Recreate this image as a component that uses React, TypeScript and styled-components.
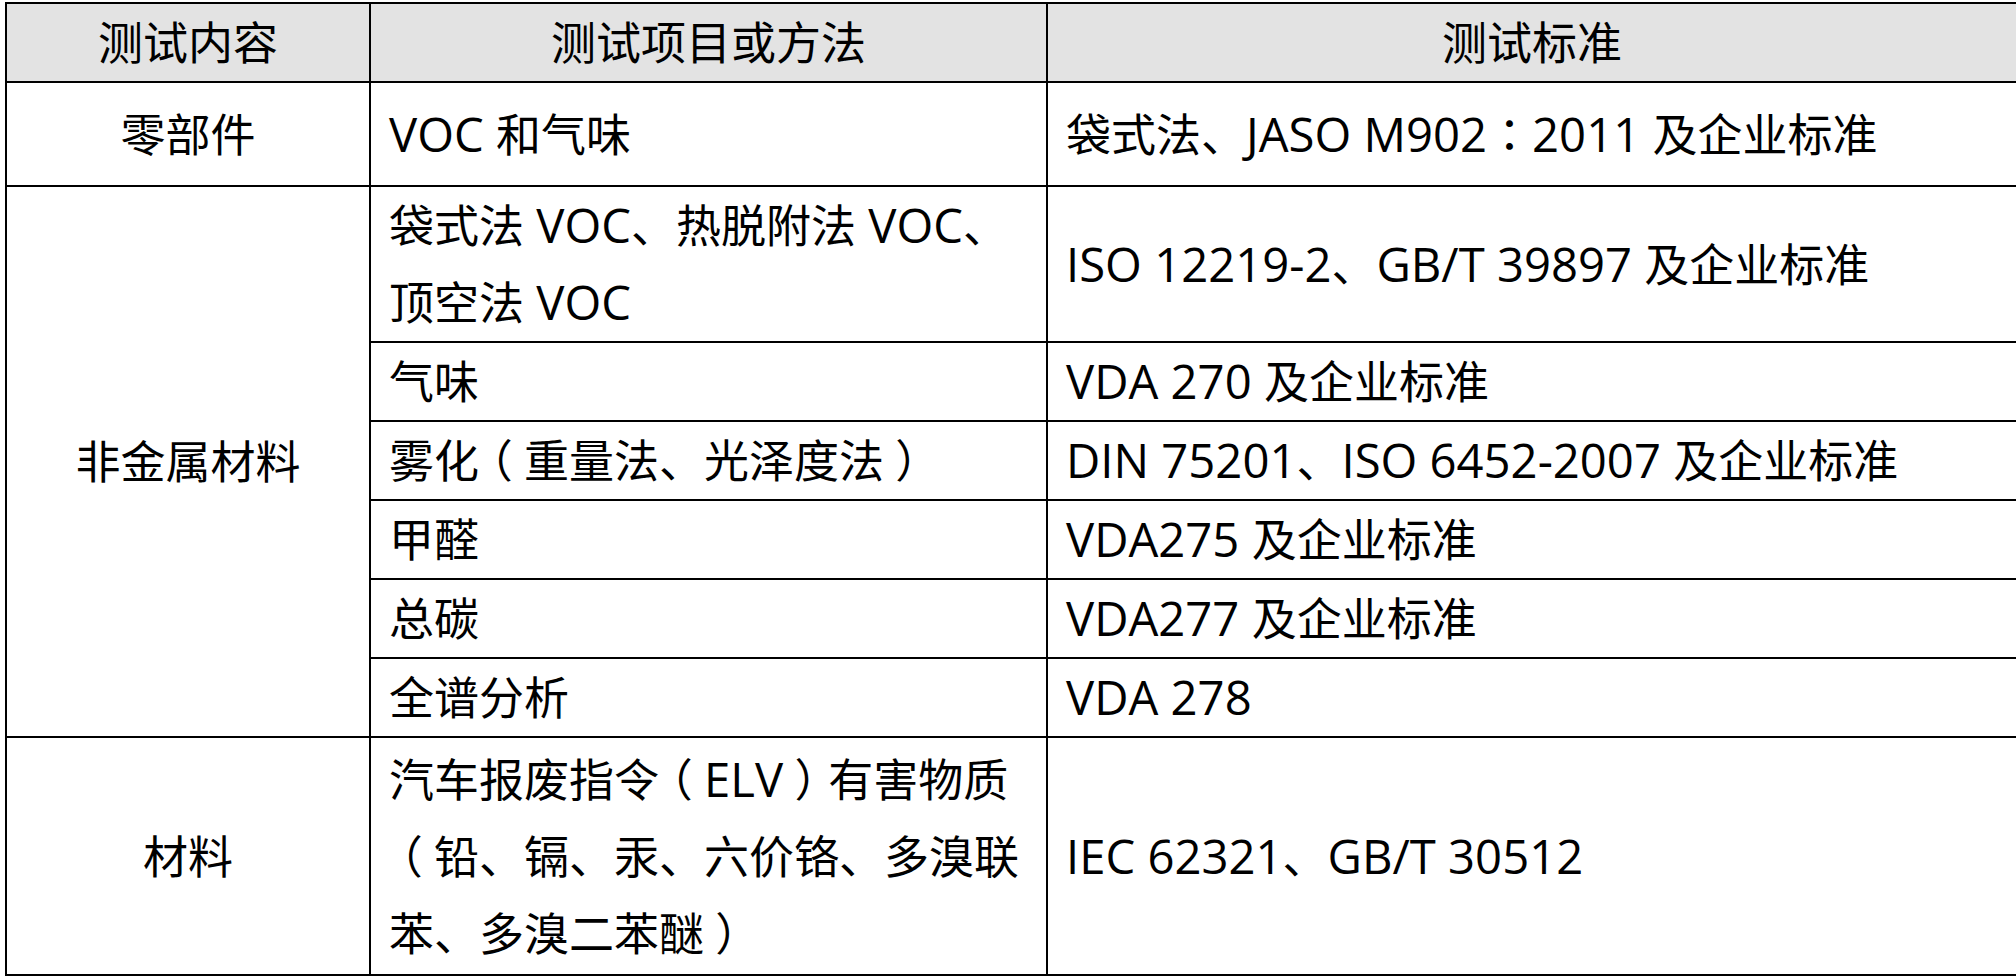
import React from 'react';
import styled, {createGlobalStyle} from 'styled-components';

const GlobalStyle = createGlobalStyle`
  html, body {
    margin: 0;
    padding: 0;
    background: #fff;
  }
  body {
    font-family: 'Open Sans', 'Noto Sans CJK SC', sans-serif;
    color: #000;
  }
`;

const Page = styled.div`
  padding: 2px 6px 0 5px;
`;

const Table = styled.table`
  width: 2005px;
  border-collapse: collapse;
  table-layout: fixed;
  font-size: 45px;
`;

const HeadCell = styled.th<{$w: number}>`
  width: ${(p) => p.$w}px;
  height: 77px;
  padding: 0;
  border: 2px solid #000;
  background: #e3e3e3;
  font-weight: 400;
  text-align: center;
  line-height: 77px;
`;

const Cell = styled.td<{$center?: boolean; $h?: number}>`
  padding: 0 0 0 ${(p) => (p.$center ? 0 : 18)}px;
  height: ${(p) => (p.$h ? `${p.$h}px` : 'auto')};
  border: 2px solid #000;
  text-align: ${(p) => (p.$center ? 'center' : 'left')};
  vertical-align: middle;
  line-height: 77px;
  white-space: nowrap;
`;

// latin runs are set a bit larger, like the YaHei latin glyphs
const Latin = styled.span`
  font-size: 1.05em;
  line-height: 1;
`;

// centred full-width colon
const Colon = styled.span`
  font-family: 'Noto Sans CJK TC', sans-serif;
  line-height: 1;
`;

// brackets: half-width form, padded back out to a centred em
const Bracket = styled.span`
  font-family: 'Noto Sans CJK SC', sans-serif;
  font-feature-settings: 'halt';
  padding: 0 0.25em;
  line-height: 1;
`;

const latinRun = /^[A-Za-z0-9 .\/\-]+$/;

function Text({s}: {s: string}) {
  const parts = s.split(/([A-Za-z0-9 .\/\-]+|[（）：])/).filter(Boolean);
  return (
    <>
      {parts.map((p, i) => {
        if (p === '：') return <Colon key={i}>{p}</Colon>;
        if (p === '（' || p === '）') return <Bracket key={i}>{p}</Bracket>;
        if (latinRun.test(p)) return <Latin key={i}>{p}</Latin>;
        return <React.Fragment key={i}>{p}</React.Fragment>;
      })}
    </>
  );
}

function Lines({lines}: {lines: string[]}) {
  return (
    <>
      {lines.map((l, i) => (
        <React.Fragment key={i}>
          {i > 0 && <br />}
          <Text s={l} />
        </React.Fragment>
      ))}
    </>
  );
}

interface IRow {
  item: string[];
  standard: string;
}

const materialRows: IRow[] = [
  {item: ['袋式法 VOC、热脱附法 VOC、', '顶空法 VOC'], standard: 'ISO 12219-2、GB/T 39897 及企业标准'},
  {item: ['气味'], standard: 'VDA 270 及企业标准'},
  {item: ['雾化（重量法、光泽度法）'], standard: 'DIN 75201、ISO 6452-2007 及企业标准'},
  {item: ['甲醛'], standard: 'VDA275 及企业标准'},
  {item: ['总碳'], standard: 'VDA277 及企业标准'},
  {item: ['全谱分析'], standard: 'VDA 278'},
];

function App() {
  return (
    <Page>
      <GlobalStyle />
      <Table>
        <thead>
          <tr>
            <HeadCell $w={362}>测试内容</HeadCell>
            <HeadCell $w={675}>测试项目或方法</HeadCell>
            <HeadCell $w={968}>测试标准</HeadCell>
          </tr>
        </thead>
        <tbody>
          <tr>
            <Cell $center $h={102}>零部件</Cell>
            <Cell>
              <Text s="VOC 和气味" />
            </Cell>
            <Cell>
              <Text s="袋式法、JASO M902：2011 及企业标准" />
            </Cell>
          </tr>
          {materialRows.map((row, i) => (
            <tr key={i}>
              {i === 0 && (
                <Cell $center rowSpan={materialRows.length}>
                  非金属材料
                </Cell>
              )}
              <Cell>
                <Lines lines={row.item} />
              </Cell>
              <Cell>
                <Text s={row.standard} />
              </Cell>
            </tr>
          ))}
          <tr>
            <Cell $center $h={236}>材料</Cell>
            <Cell>
              <Lines lines={['汽车报废指令（ELV）有害物质', '（铅、镉、汞、六价铬、多溴联', '苯、多溴二苯醚）']} />
            </Cell>
            <Cell>
              <Text s="IEC 62321、GB/T 30512" />
            </Cell>
          </tr>
        </tbody>
      </Table>
    </Page>
  );
}

export default App;
